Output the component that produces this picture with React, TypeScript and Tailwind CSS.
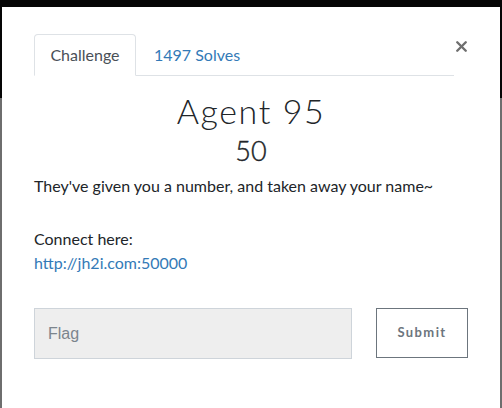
import { X } from "lucide-react";

export default function App() {
  return (
    <div className="h-[408px] w-[502px] overflow-hidden bg-[linear-gradient(#050505_0_98px,#6e6e6e_98px)] px-[2px] pt-[7px] font-['Lato',sans-serif]">
      <div className="h-[420px] w-full bg-white">
        {/* tabs */}
        <div className="flex items-start pt-[27px] pl-[32px]">
          <div className="flex w-[420px] border-b border-[#dee2e6]">
            <div className="-mb-px flex h-[42px] w-[102px] items-center justify-center rounded-t border border-b-white border-[#dee2e6] bg-white text-[16px] text-[#495057]">
              Challenge
            </div>
            <div className="flex h-[41px] items-center pl-[18px] text-[16px] text-[#337ab7]">
              1497 Solves
            </div>
          </div>
          <button className="-ml-[3px] mt-[2px] flex h-[20px] w-[20px] items-center justify-center text-[#6f6f6f]">
            <X size={17} strokeWidth={3.4} />
          </button>
        </div>

        {/* header */}
        <div className="mt-[15px] flex flex-col items-center">
          <h1 className="text-[34px] font-light leading-[40px] tracking-[1.6px] text-[#212529]">
            Agent 95
          </h1>
          <h2 className="mt-[3px] text-[27px] font-light leading-[34px] text-[#212529] [-webkit-text-stroke:0.4px_#212529]">
            50
          </h2>
        </div>

        {/* description */}
        <div className="px-[32px] pt-[6px] text-[16px] leading-[24px] text-[#212529]">
          <p>They've given you a number, and taken away your name~</p>
          <p className="mt-[29px]">
            Connect here:
            <br />
            <a className="text-[#337ab7]">http://jh2i.com:50000</a>
          </p>
        </div>

        {/* flag form */}
        <div className="mt-[33px] flex items-start px-[32px]">
          <input
            placeholder="Flag"
            className="h-[51px] w-[318px] border border-[#ced4da] bg-[#eeeeee] px-[13px] font-['Liberation_Sans',sans-serif] text-[16px] text-[#495057] placeholder:text-[#7c858d]"
          />
          <button className="ml-[24px] h-[50px] w-[92px] border border-[#6c757d] bg-white text-[13px] font-bold tracking-[1.4px] text-[#6c757d]">
            Submit
          </button>
        </div>
      </div>
    </div>
  );
}
